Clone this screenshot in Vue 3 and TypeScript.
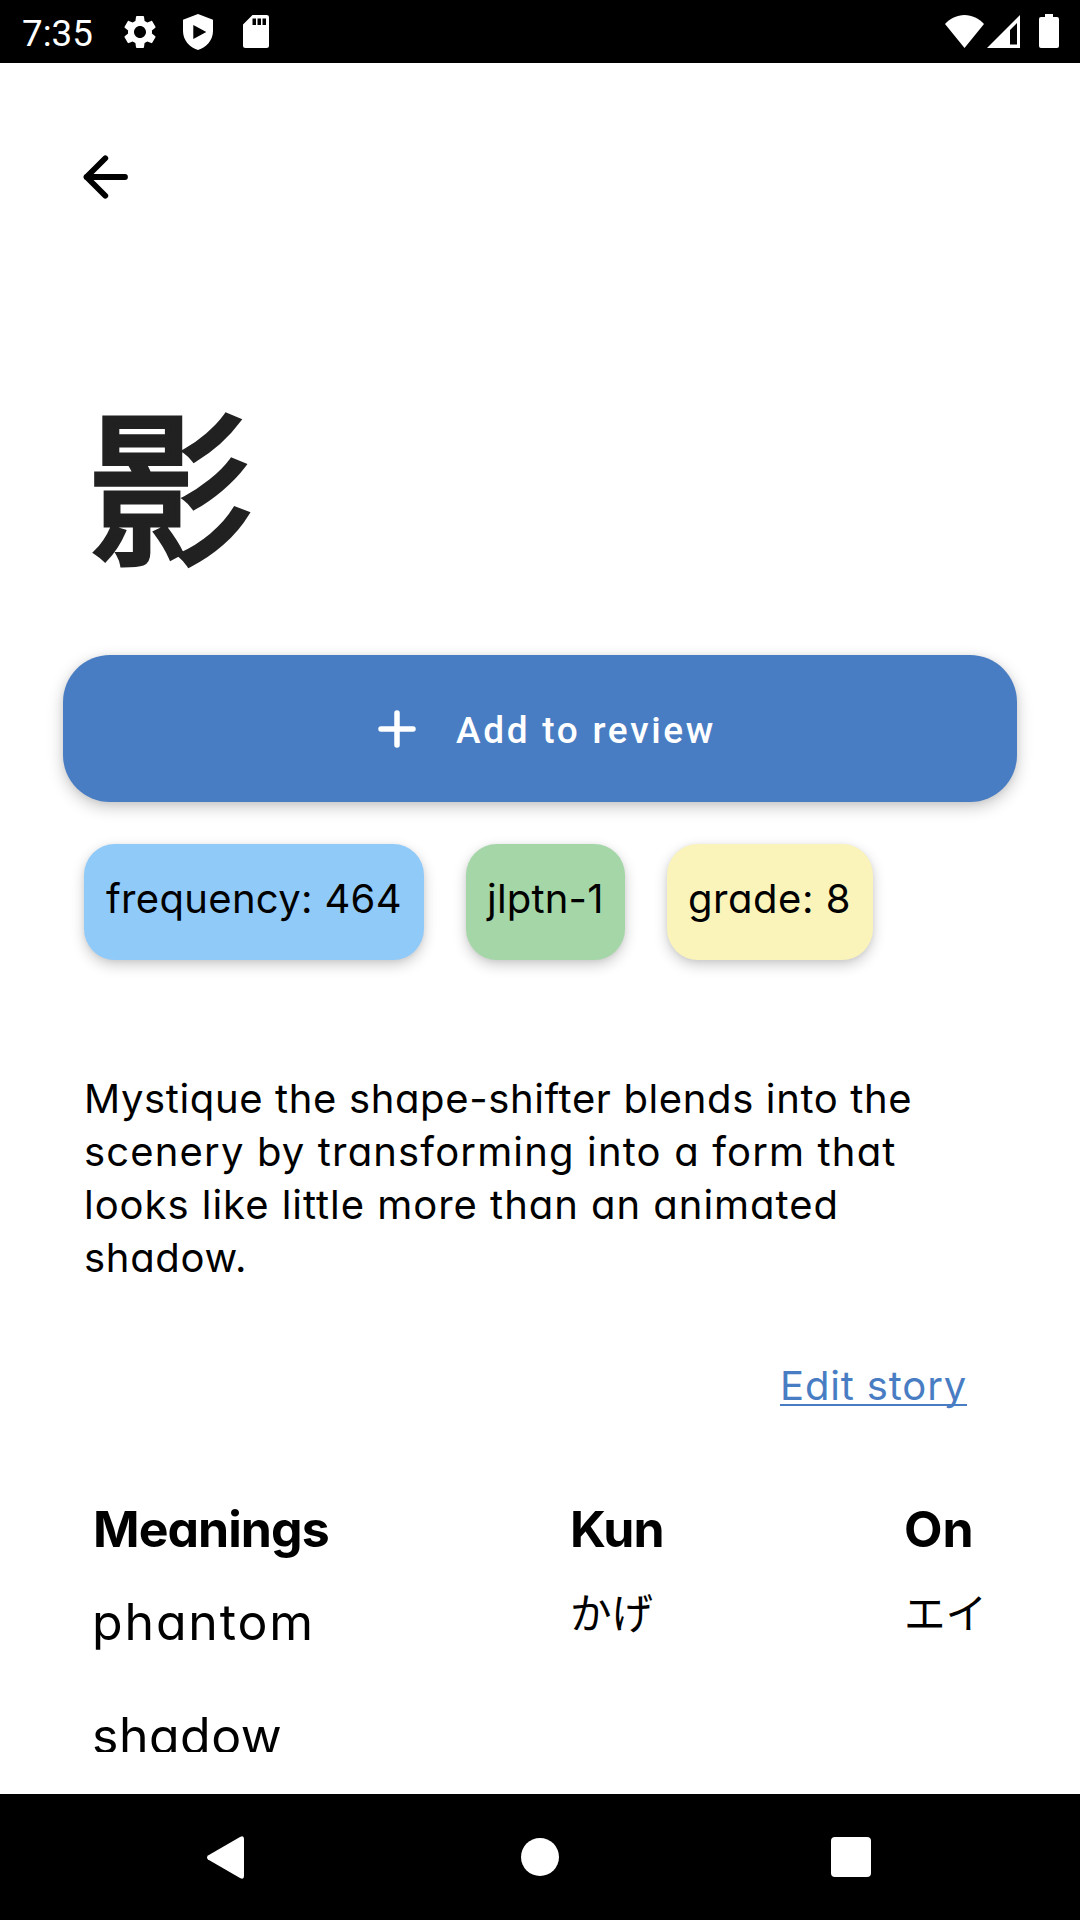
<script setup lang="ts">
interface Chip {
  label: string
  tone: string
}

const chips: Chip[] = [
  { label: 'frequency: 464', tone: 'blue' },
  { label: 'jlptn-1', tone: 'green' },
  { label: 'grade: 8', tone: 'yellow' },
]

const story: string[] = [
  'Mystique the shape-shifter blends into the',
  'scenery by transforming into a form that',
  'looks like little more than an animated',
  'shadow.',
]

const meanings: string[] = ['phantom', 'shadow']
</script>

<template>
  <div class="screen">
    <header class="status">
      <div class="status-left">
        <span class="clock">7:35</span>
        <svg class="gear" viewBox="0 0 24 24"><path d="M19.14 12.94c.04-.3.06-.61.06-.94 0-.32-.02-.64-.07-.94l2.03-1.58c.18-.14.23-.41.12-.61l-1.92-3.32c-.12-.22-.37-.29-.59-.22l-2.39.96c-.5-.38-1.03-.7-1.62-.94L14.4 2.81c-.04-.24-.24-.41-.48-.41h-3.84c-.24 0-.43.17-.47.41l-.36 2.54c-.59.24-1.13.57-1.62.94l-2.39-.96c-.22-.08-.47 0-.59.22L2.74 8.87c-.12.21-.08.47.12.61l2.03 1.58c-.05.3-.09.63-.09.94s.02.64.07.94l-2.03 1.58c-.18.14-.23.41-.12.61l1.92 3.32c.12.22.37.29.59.22l2.39-.96c.5.38 1.03.7 1.62.94l.36 2.54c.05.24.24.41.48.41h3.84c.24 0 .44-.17.47-.41l.36-2.54c.59-.24 1.13-.56 1.62-.94l2.39.96c.22.08.47 0 .59-.22l1.92-3.32c.12-.22.07-.47-.12-.61l-2.01-1.58zM12 15.6c-1.98 0-3.6-1.62-3.6-3.6s1.62-3.6 3.6-3.6 3.6 1.62 3.6 3.6-1.62 3.6-3.6 3.6z" /></svg>
        <svg class="shield" viewBox="0 0 30 36"><path fill-rule="evenodd" d="M15 0 30 5.7V17C30 26 23.5 33.5 15 36 6.500 33.500 0 26 0 17V5.700ZM10.300 11V25L23.300 18Z" /></svg>
        <svg class="sd" viewBox="0 0 26 33"><path fill-rule="evenodd" d="M9.500 0H23.500A2.500 2.500 0 0 1 26 2.500V30.500A2.500 2.500 0 0 1 23.500 33H2.500A2.500 2.500 0 0 1 0 30.500V9.500ZM9.500 3.500V10H13V3.500ZM14.500 3.500V10H18V3.500ZM19.500 3.500V10H23V3.500Z" /></svg>
      </div>
      <div class="status-right">
        <svg class="wifi" viewBox="0 0 39 33"><path d="M19.500 33 0 9C5 3.500 12 0 19.500 0S34 3.500 39 9Z" /></svg>
        <svg class="signal" viewBox="0 0 33 33"><path fill-rule="evenodd" d="M33 0V33H0ZM30 8 23 15V29.500H30Z" /></svg>
        <svg class="battery" viewBox="0 0 20 34"><path d="M6 0H14V3H18A2 2 0 0 1 20 5V32A2 2 0 0 1 18 34H2A2 2 0 0 1 0 32V5A2 2 0 0 1 2 3H6Z" /></svg>
      </div>
    </header>

    <main class="content">
      <svg class="back" viewBox="0 0 46 46"><path d="M22.300 4.300 3.500 23 22.300 41.700M3.500 23H42" /></svg>

      <h1 class="kanji">影</h1>

      <button class="add" type="button">
        <svg class="plus" viewBox="0 0 38 38"><path d="M19 3V35M3 19H35" /></svg>
        <span>Add to review</span>
      </button>

      <div class="chips">
        <span v-for="chip in chips" :key="chip.label" class="chip" :class="chip.tone">{{ chip.label }}</span>
      </div>

      <p class="story">
        <span v-for="(line, i) in story" :key="i" class="line" :class="'line-' + i">{{ line }}</span>
      </p>

      <div class="edit-row"><a class="edit">Edit story</a></div>

      <section class="table">
        <div class="col">
          <h2>Meanings</h2>
          <p v-for="m in meanings" :key="m" class="meaning" :class="m">{{ m }}</p>
        </div>
        <div class="col">
          <h2>Kun</h2>
          <p class="kana">かげ</p>
        </div>
        <div class="col">
          <h2 class="on">On</h2>
          <p class="kana">エイ</p>
        </div>
      </section>
    </main>

    <nav class="nav">
      <svg class="n-back" viewBox="0 0 37 43"><path d="M1 19.500 33 1Q37 -1 37 3V40Q37 44 33 42L1 23.500Q-1 21.500 1 19.500Z" /></svg>
      <span class="n-home"></span>
      <span class="n-recent"></span>
    </nav>
  </div>
</template>

<style>
body {
  margin: 0;
  background: #fff;
}
</style>

<style scoped>
.screen {
  width: 1080px;
  height: 1920px;
  display: flex;
  flex-direction: column;
  background: #fff;
  color: #000;
  font-family: Inter, 'Noto Sans CJK JP', sans-serif;
  font-feature-settings: 'cv11';
  font-weight: 400;
  overflow: hidden;
}
h1, h2, p {
  margin: 0;
}
.status {
  height: 63px;
  flex: none;
  background: #000;
  display: flex;
  justify-content: space-between;
  box-sizing: border-box;
  padding: 0 21px;
}
.status svg {
  fill: #fff;
  display: block;
}
.status-left, .status-right {
  display: flex;
  align-items: center;
}
.status-left {
  height: 63px;
}
.clock {
  font: 400 36.75px/63px Roboto, sans-serif;
  color: #fff;
  width: 98px;
  padding: 3px 0 0 1px;
}
.gear {
  width: 40px;
  height: 40px;
}
.shield {
  width: 30px;
  height: 36px;
  margin-left: 23px;
}
.sd {
  width: 26px;
  height: 33px;
  margin-left: 30px;
}
.status-right {
  height: 62px;
}
.wifi {
  width: 39px;
  height: 33px;
}
.signal {
  width: 33px;
  height: 33px;
  margin-left: 3px;
}
.battery {
  width: 20px;
  height: 34px;
  margin-left: 19px;
}
.content {
  height: 1689px;
  flex: none;
  overflow: hidden;
  display: flex;
  flex-direction: column;
}
.back {
  width: 46px;
  height: 46px;
  flex: none;
  margin: 91px 0 0 83px;
}
.back path, .plus path {
  fill: none;
  stroke: #000;
  stroke-width: 5.800px;
  stroke-linecap: round;
  stroke-linejoin: round;
}
.kanji {
  margin: 160px 0 0 87px;
  height: 240px;
  flex: none;
  font: 400 166px/240px 'Noto Sans CJK SC', sans-serif;
  color: #212121;
  -webkit-text-stroke: 5.200px #212121;
}
.add {
  margin: 55px 63px 0;
  height: 147px;
  flex: none;
  border: 0;
  padding: 0;
  border-radius: 47px;
  background: #497dc3;
  box-shadow: 0 5px 16px rgba(0, 0, 0, 0.22), 0 1px 6px rgba(0, 0, 0, 0.06);
  display: flex;
  align-items: center;
  color: #fff;
  font: 500 37px/48px Roboto, sans-serif;
  letter-spacing: 2.700px;
}
.add span {
  margin-left: 40.500px;
  padding-top: 5px;
}
.plus {
  width: 38px;
  height: 38px;
  margin-left: 314.500px;
}
.plus path {
  stroke: #fff;
  stroke-width: 5.500px;
}
.chips {
  display: flex;
  gap: 42px;
  margin: 42px 0 0 84px;
}
.chip {
  height: 116px;
  box-sizing: border-box;
  padding: 28px 0 0 21px;
  border-radius: 31px;
  font-size: 40px;
  line-height: 53px;
  white-space: nowrap;
  box-shadow: 0 5px 14px rgba(0, 0, 0, 0.2), 0 1px 5px rgba(0, 0, 0, 0.06);
}
.blue {
  width: 340px;
  padding-left: 22px;
  letter-spacing: 0.320px;
  background: #90caf9;
}
.green {
  width: 159px;
  letter-spacing: 0.200px;
  background: #a5d6a7;
}
.yellow {
  width: 206px;
  letter-spacing: 0.550px;
  background: #faf4ba;
}
.story {
  margin: 111.500px 0 0 84px;
  font-size: 40px;
  line-height: 53px;
}
.line {
  display: block;
  white-space: nowrap;
}
.line-0 {
  letter-spacing: 0.630px;
}
.line-1 {
  letter-spacing: 1.160px;
}
.line-2 {
  letter-spacing: 0.970px;
}
.line-3 {
  letter-spacing: 0.700px;
}
.edit-row {
  display: flex;
  margin: 75px 113px 0 0;
  justify-content: flex-end;
}
.edit {
  color: #497dc3;
  font-size: 40px;
  line-height: 53px;
  letter-spacing: 0.850px;
  text-decoration: underline;
  text-decoration-thickness: 2px;
  text-underline-offset: 4px;
  text-decoration-skip-ink: none;
}
.table {
  margin: 84.500px 0 0 93px;
  display: grid;
  grid-template-columns: 477px 334px 1fr;
}
h2 {
  font-size: 50px;
  line-height: 66px;
  font-weight: 700;
  letter-spacing: -0.950px;
}
.on {
  letter-spacing: 0;
}
.meaning {
  font-size: 50px;
  line-height: 66px;
  margin: 27px 0 48px -1px;
}
.meaning + .meaning {
  margin-top: 0;
}
.phantom {
  letter-spacing: 1.850px;
}
.shadow {
  letter-spacing: 0.500px;
}
.kana {
  font: 400 41.500px/60px 'Noto Sans CJK JP', sans-serif;
  margin-top: 19px;
}
.nav {
  height: 126px;
  flex: none;
  margin-top: 42px;
  background: #000;
  display: flex;
  align-items: center;
}
.n-back {
  width: 37px;
  height: 43px;
  margin-left: 207px;
  fill: #fff;
}
.n-home {
  width: 38px;
  height: 38px;
  border-radius: 50%;
  background: #fff;
  margin-left: 277px;
}
.n-recent {
  width: 40px;
  height: 40px;
  border-radius: 4px;
  background: #fff;
  margin-left: 272px;
}
</style>
